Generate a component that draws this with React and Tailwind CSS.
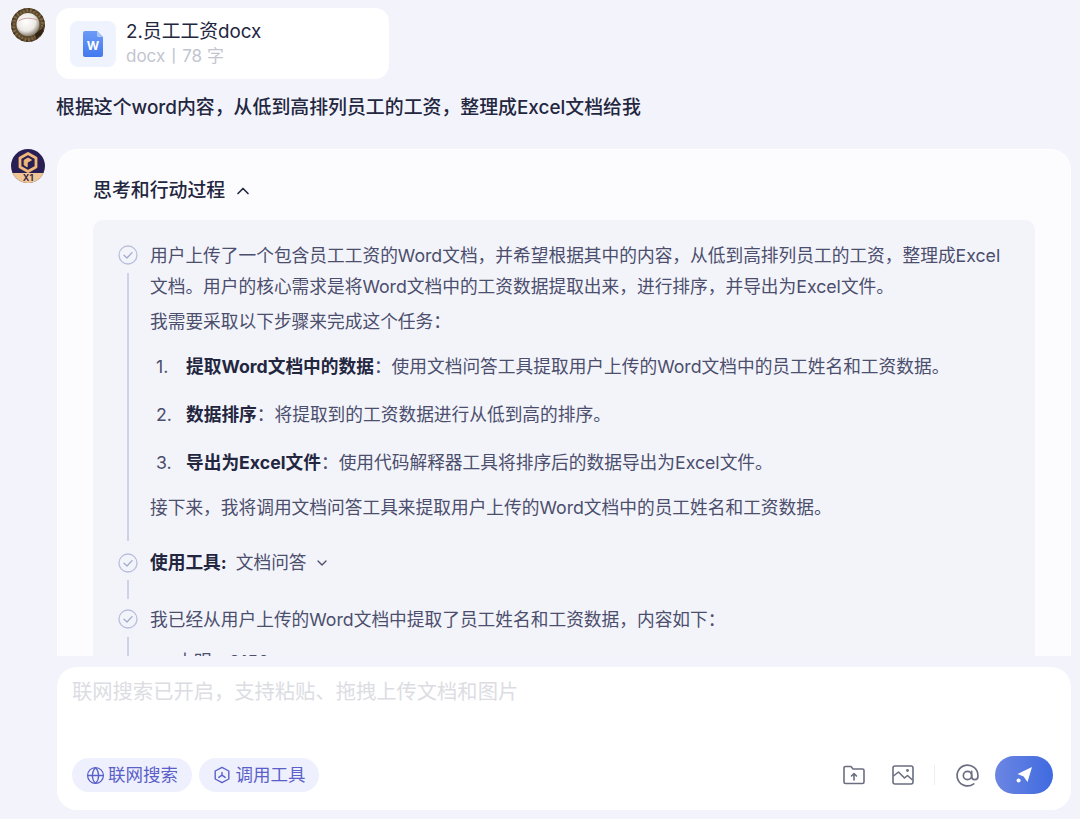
import { ChevronUp, ChevronDown, Globe, AtSign } from 'lucide-react';

const FONT = "font-['Inter','Noto_Sans_CJK_SC',sans-serif]";

function UserAvatar() {
  return (
    <svg width="34" height="34" viewBox="0 0 34 34" className="shrink-0">
      <defs>
        <radialGradient id="ball" cx="42%" cy="38%" r="62%">
          <stop offset="0%" stopColor="#ffffff" />
          <stop offset="65%" stopColor="#ece9e4" />
          <stop offset="100%" stopColor="#8f8678" />
        </radialGradient>
      </defs>
      <circle cx="17" cy="17" r="17" fill="#5e4a2e" />
      <circle cx="17" cy="17" r="14.5" fill="none" stroke="#86704c" strokeWidth="3" strokeDasharray="1.5 2" />
      <circle cx="17" cy="17" r="16" fill="none" stroke="#46361f" strokeWidth="1.6" strokeDasharray="2 3" />
      <path d="M24 26 L33 19 L31 26 L25 31 Z" fill="#2f2517" />
      <circle cx="17" cy="16.5" r="11.5" fill="url(#ball)" />
      <path d="M7.5 13 C12 9.5 21 9.5 26 12" stroke="#c79a9a" strokeWidth="0.9" fill="none" />
    </svg>
  );
}

function BotAvatar() {
  return (
    <div className="relative w-[34px] h-[34px] rounded-full overflow-hidden shrink-0 bg-[#2a1f55]">
      <div className="absolute bottom-0 left-0 right-0 h-[10px] bg-[#f0c695]" />
      <svg width="34" height="34" viewBox="0 0 34 34" className="absolute top-0 left-0">
        <path d="M17 4.5 L25 9 V18 L17 22.5 L9 18 V9 Z" fill="none" stroke="#efb878" strokeWidth="2.8" strokeLinejoin="round" />
        <path d="M20.5 11 L17 9 L13.2 11.2 V16 L16.2 17.8 V13.4 L20.5 11" fill="#efb878" stroke="#efb878" strokeWidth="1" strokeLinejoin="round" />
      </svg>
      <span className="absolute bottom-0 left-0 right-0 text-center text-[9px] leading-[10px] font-bold text-[#3a2c4a]">X1</span>
    </div>
  );
}

function WordIcon() {
  return (
    <div className="relative w-[20px] h-[26px]">
      <svg width="20" height="26" viewBox="0 0 20 26" className="absolute top-0 left-0">
        <defs>
          <linearGradient id="doc" x1="0" y1="0" x2="0" y2="1">
            <stop offset="0%" stopColor="#6c9bf6" />
            <stop offset="100%" stopColor="#4379ee" />
          </linearGradient>
        </defs>
        <path d="M2 0 H14 L20 6 V24 A2 2 0 0 1 18 26 H2 A2 2 0 0 1 0 24 V2 A2 2 0 0 1 2 0 Z" fill="url(#doc)" />
        <path d="M14 0 L20 6 H15 A1 1 0 0 1 14 5 Z" fill="#a9c5fb" />
      </svg>
      <span className="absolute left-0 right-0 top-[8px] text-center text-[12px] leading-[14px] font-bold text-white">W</span>
    </div>
  );
}

function CheckCircle() {
  return (
    <svg width="20" height="20" viewBox="0 0 20 20" fill="none" className="shrink-0">
      <circle cx="10" cy="10" r="9" stroke="#b9bfdc" strokeWidth="1.3" />
      <path d="M6 10.2 L9 13 L14 7.6" stroke="#a3a9cc" strokeWidth="1.3" strokeLinecap="round" strokeLinejoin="round" />
    </svg>
  );
}

function ToolIcon() {
  return (
    <svg width="18" height="18" viewBox="0 0 18 18" fill="none">
      <path d="M9 1.4 L15.8 5 V13 L9 16.6 L2.2 13 V5 Z" stroke="#5a60c8" strokeWidth="1.4" strokeLinejoin="round" />
      <path d="M9 6.4 V9.2 M9 9.2 L5.8 11.4 M9 9.2 L12.2 11.4" stroke="#5a60c8" strokeWidth="1.4" strokeLinecap="round" />
    </svg>
  );
}

function FolderUp() {
  return (
    <svg width="22" height="20" viewBox="0 0 22 20" fill="none">
      <path d="M1 3 A1.5 1.5 0 0 1 2.5 1.5 H8 L10 4 H19.5 A1.5 1.5 0 0 1 21 5.5 V17 A1.5 1.5 0 0 1 19.5 18.5 H2.5 A1.5 1.5 0 0 1 1 17 Z" stroke="#6b6e80" strokeWidth="1.6" strokeLinejoin="round" />
      <path d="M11 15 V9 M8.5 11 L11 8.6 L13.5 11" stroke="#6b6e80" strokeWidth="1.6" strokeLinecap="round" strokeLinejoin="round" />
    </svg>
  );
}

function PictureIcon() {
  return (
    <svg width="22" height="20" viewBox="0 0 22 20" fill="none">
      <rect x="1" y="1" width="20" height="18" rx="2" stroke="#6b6e80" strokeWidth="1.6" />
      <path d="M1.5 11 L6.5 7 L12.5 13 L15.5 10.5 L20.5 15" stroke="#6b6e80" strokeWidth="1.6" strokeLinejoin="round" />
      <circle cx="15.5" cy="5.5" r="1.4" fill="#6b6e80" />
    </svg>
  );
}

function SendIcon() {
  return (
    <svg width="18" height="18" viewBox="0 0 18 18">
      <path d="M17 1 L12.5 16 L8.6 10.4 L2.5 8 Z" fill="#ffffff" />
      <circle cx="3.6" cy="14.4" r="2" fill="#ffffff" />
    </svg>
  );
}

function Line({ className }) {
  return <div className={`w-[2px] bg-[#cdd2ea] ml-[9px] ${className}`} />;
}

function Step({ className = '', lineClass, children }) {
  return (
    <div className={`flex gap-[12px] ${className}`}>
      <div className="w-[20px] shrink-0 flex flex-col">
        <div className="h-[30px] flex items-center"><CheckCircle /></div>
        <Line className={lineClass} />
      </div>
      <div className="flex-1 min-w-0">{children}</div>
    </div>
  );
}

const plan = [
  ['提取Word文档中的数据', '：使用文档问答工具提取用户上传的Word文档中的员工姓名和工资数据。'],
  ['数据排序', '：将提取到的工资数据进行从低到高的排序。'],
  ['导出为Excel文件', '：使用代码解释器工具将排序后的数据导出为Excel文件。'],
];

export default function App() {
  return (
    <div className={`${FONT} h-[819px] w-[1080px] bg-[#f3f4fb] flex flex-col overflow-hidden`}>
      {/* Messages */}
      <div className="h-[656px] overflow-hidden pl-[11px] pr-[9px] pt-[8px]">
        <div className="flex gap-[11px]">
          <UserAvatar />
          <div>
            <div className="w-[333px] h-[71px] bg-white rounded-[14px] flex items-center gap-[10px] pl-[14px]">
              <div className="w-[46px] h-[46px] rounded-[8px] bg-[#eef3fe] flex items-center justify-center">
                <WordIcon />
              </div>
              <div>
                <div className="text-[18.8px] leading-[24px] text-[#23263f]">2.员工工资docx</div>
                <div className="text-[17px] leading-[24px] text-[#c3c5d0]">docx丨78 字</div>
              </div>
            </div>
            <p className="mt-[15px] text-[18.9px] leading-[28px] font-medium text-[#23263f]">
              根据这个word内容，从低到高排列员工的工资，整理成Excel文档给我
            </p>
          </div>
        </div>

        <div className="flex gap-[12px] mt-[27px]">
          <BotAvatar />
          <div className="flex-1 bg-[#fcfcfe] rounded-t-[20px] border border-white pl-[35px] pr-[35px] pt-[27px]">
            <div className="flex items-center gap-[8px] h-[28px] text-[18.9px] font-medium text-[#23263f]">
              思考和行动过程
              <ChevronUp size={20} strokeWidth={2} />
            </div>
            <div className="mt-[15px] bg-[#f3f4fa] rounded-t-[10px] pl-[25px] pr-[28px] pt-[20px] text-[17.72px] leading-[30px] text-[#4b4e6d]">
              <Step lineClass="h-[268px] mt-[3px]">
                <p className="leading-[31px]">用户上传了一个包含员工工资的Word文档，并希望根据其中的内容，从低到高排列员工的工资，整理成Excel文档。用户的核心需求是将Word文档中的工资数据提取出来，进行排序，并导出为Excel文件。</p>
                <p className="mt-[5px]">我需要采取以下步骤来完成这个任务：</p>
                <ol className="mt-[15px] flex flex-col gap-[18px]">
                  {plan.map(([head, rest], i) => (
                    <li key={head} className="flex">
                      <span className="w-[36px] pl-[6px] shrink-0">{i + 1}.</span>
                      <span><strong className="font-bold text-[#23263f]">{head}</strong>{rest}</span>
                    </li>
                  ))}
                </ol>
                <p className="mt-[15px]">接下来，我将调用文档问答工具来提取用户上传的Word文档中的员工姓名和工资数据。</p>
              </Step>
              <Step className="mt-[7px]" lineClass="h-[19px] mt-[2px]">
                <div className="flex items-center gap-[7px]">
                  <strong className="font-bold text-[#23263f] mr-[2px]">使用工具:</strong>
                  <span className="ml-[0px]">文档问答</span>
                  <ChevronDown size={16} strokeWidth={2} />
                </div>
              </Step>
              <Step className="mt-[5px]" lineClass="h-[30px] mt-[3px]">
                <p className="mt-[1px]">我已经从用户上传的Word文档中提取了员工姓名和工资数据，内容如下：</p>
                <p className="mt-[12px] pl-[26px]">小明：8150</p>
              </Step>
            </div>
          </div>
        </div>
      </div>

      {/* Composer */}
      <div className="pl-[57px] pr-[9px] pt-[11px]">
        <div className="h-[143px] bg-white rounded-[20px] px-[15px] pt-[11px] pb-[16px] flex flex-col justify-between">
          <div className="text-[20.3px] leading-[28px] text-[#dcdde3]">联网搜索已开启，支持粘贴、拖拽上传文档和图片</div>
          <div className="flex items-center justify-between pr-[3px]">
            <div className="flex gap-[7px]">
              <div className="h-[34px] w-[120px] rounded-full bg-[#eef0fd] flex items-center justify-center gap-[3px] text-[17.5px] text-[#5a60c8]">
                <Globe size={19} strokeWidth={1.6} />
                联网搜索
              </div>
              <div className="h-[34px] w-[120px] rounded-full bg-[#eef0fd] flex items-center justify-center gap-[5px] text-[17.5px] text-[#5a60c8]">
                <ToolIcon />
                调用工具
              </div>
            </div>
            <div className="flex items-center">
              <FolderUp />
              <div className="ml-[27px]"><PictureIcon /></div>
              <div className="w-px h-[20px] bg-[#eceef3] ml-[20px]" />
              <AtSign size={25} strokeWidth={1.6} className="ml-[20px] text-[#6b6e80]" />
              <div className="ml-[15px] w-[58px] h-[38px] rounded-full bg-gradient-to-r from-[#6c86e2] to-[#3f6ae0] flex items-center justify-center">
                <SendIcon />
              </div>
            </div>
          </div>
        </div>
      </div>
    </div>
  );
}
